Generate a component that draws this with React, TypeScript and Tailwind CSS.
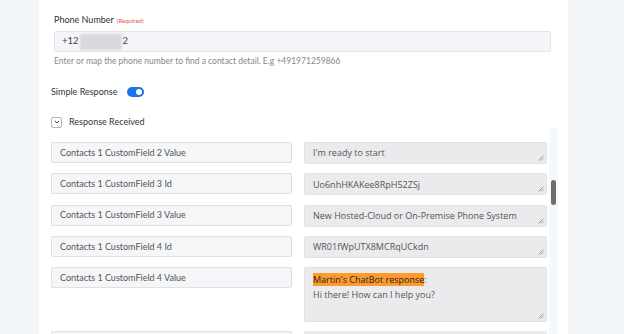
import React from "react";

const rows = [
  { label: "Contacts 1 CustomField 2 Value", value: "I'm ready to start" },
  { label: "Contacts 1 CustomField 3 Id", value: "Uo6nhHKAKee8RpH52ZSj" },
  { label: "Contacts 1 CustomField 3 Value", value: "New Hosted-Cloud or On-Premise Phone System" },
  { label: "Contacts 1 CustomField 4 Id", value: "WR01fWpUTX8MCRqUCkdn" },
];

const Grip = () => (
  <svg className="absolute bottom-[2px] right-[2px]" width="6" height="6" viewBox="0 0 6 6">
    <path d="M5.5 0.5 L0.5 5.5 M5.5 3 L3 5.5" stroke="#8a8a8a" strokeWidth="0.8" />
  </svg>
);

const LeftField = ({ text }: { text: string }) => (
  <div className="h-[21px] flex items-center px-[8px] bg-[#f5f6f8] border border-[#dfe1e6] rounded-[2px] text-[9px] text-[#555] font-['Lato',sans-serif]">
    {text}
  </div>
);

const RightField = ({ children, tall }: { children: React.ReactNode; tall?: boolean }) => (
  <div
    className={
      tall
        ? "relative h-[55px] px-[8px] pt-[4px] bg-[#ebebed] border border-[#e2e2e4] rounded-[2px] text-[9px] leading-[15px] text-[#555] font-['Open_Sans',sans-serif]"
        : "relative h-[22px] flex items-center px-[8px] bg-[#ebebed] border border-[#e2e2e4] rounded-[2px] text-[9px] text-[#555] font-['Open_Sans',sans-serif]"
    }
  >
    {children}
    <Grip />
  </div>
);

export default function App() {
  return (
    <div className="flex w-[624px] h-[334px] overflow-hidden bg-[#f3f6f9] font-['Lato',sans-serif]">
      <div className="w-[39px] shrink-0" />
      <div className="relative w-[529px] shrink-0 bg-white pl-[12px] pt-[14px]">
        <div className="pl-[3px] pr-[17px]">
          <div className="h-[12px] flex items-center text-[9px] text-[#333]">
            Phone Number
            <span className="ml-[3px] text-[6px] text-[#e0514f]">(Required)</span>
          </div>
          <div className="mt-[5px] h-[21px] flex items-center px-[7px] bg-[#f4f5f9] border border-[#e2e4ea] rounded-[2px] text-[9.5px] text-[#444]">
            +12
            <span className="inline-block w-[42px] h-[16px] mx-[1px] bg-[#d9d9db] blur-[1px]" />
            2
          </div>
          <div className="mt-[3px] h-[12px] flex items-center text-[8.5px] text-[#888]">
            Enter or map the phone number to find a contact detail. E.g +491971259866
          </div>
        </div>

        <div className="mt-[18px] h-[14px] flex items-center text-[9px] text-[#333]">
          Simple Response
          <span className="ml-[10px] w-[17px] h-[10px] rounded-full bg-[#1a73e8] flex items-center justify-end pr-[2px]">
            <span className="w-[6px] h-[6px] rounded-full bg-white" />
          </span>
        </div>

        <div className="mt-[16px] h-[14px] flex items-center text-[9px] text-[#333]">
          <span className="w-[11px] h-[11px] border border-[#b5b5b5] rounded-[2px] flex items-center justify-center">
            <svg width="6" height="4" viewBox="0 0 6 4">
              <path d="M0.8 0.8 L3 3 L5.2 0.8" fill="none" stroke="#444" strokeWidth="1" />
            </svg>
          </span>
          <span className="ml-[7px]">Response Received</span>
        </div>

        <div className="mt-[13px] grid grid-cols-[241px_243px] gap-x-[12px] gap-y-[9.3px] items-start">
          {rows.map((r) => (
            <React.Fragment key={r.label}>
              <LeftField text={r.label} />
              <RightField>{r.value}</RightField>
            </React.Fragment>
          ))}
          <LeftField text="Contacts 1 CustomField 4 Value" />
          <RightField tall>
            <div>
              <span className="bg-[#ff9a2e] text-[#222]">Martin's ChatBot response</span>:
            </div>
            <div>Hi there! How can I help you?</div>
          </RightField>
          <div className="h-[21px] bg-[#f5f6f8] border border-[#dfe1e6] rounded-[2px]" />
          <div className="h-[22px] bg-[#ebebed] rounded-[2px]" />
        </div>

        <div className="absolute left-[510px] top-[128px] w-[9px] h-[206px] bg-[#f6f9fb]" />
        <div className="absolute left-[512px] top-[180px] w-[5px] h-[25px] rounded-full bg-[#6e6e6e]" />
      </div>
      <div className="flex-1" />
    </div>
  );
}
